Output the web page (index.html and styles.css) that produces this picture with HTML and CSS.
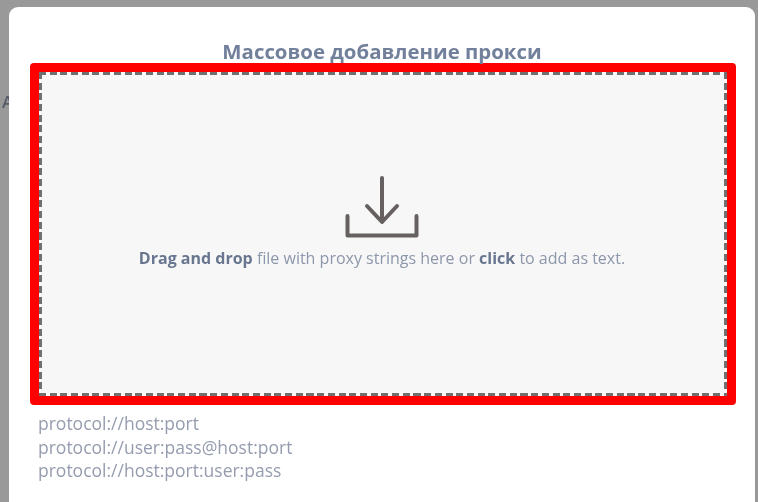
FILE: index.html
```html
<!DOCTYPE html>
<html lang="ru">
<head>
<meta charset="utf-8">
<title>Массовое добавление прокси</title>
<link rel="stylesheet" href="styles.css">
</head>
<body>
<span class="behind-letter">A</span>
<main class="modal">
  <h1 class="modal-title">Массовое добавление прокси</h1>
  <section class="highlight">
    <div class="dropzone">
      <svg class="drop-icon" width="74" height="64" viewBox="0 0 74 64" fill="none" stroke="#666060" stroke-width="4" stroke-linecap="round" stroke-linejoin="round">
        <path d="M37 3V46"/>
        <path d="M22 31L37 47L52 31"/>
        <path d="M2.500 41V60.500H71.500V41"/>
      </svg>
      <p class="drop-text"><strong>Drag and drop</strong> file with proxy strings here or <strong>click</strong> to add as text.</p>
    </div>
  </section>
  <div class="formats">
    <div>protocol://host:port</div>
    <div>protocol://user:pass@host:port</div>
    <div>protocol://host:port:user:pass</div>
  </div>
</main>
</body>
</html>
```

FILE: styles.css
```css
* { box-sizing: border-box; }
html, body { height: 100%; }
body {
  margin: 0;
  padding: 7px 3px 0 9px;
  background: #999999;
  overflow: hidden;
  font-family: "Open Sans", "Noto Sans", sans-serif;
}
.behind-letter {
  position: absolute;
  left: 2px;
  top: 90px;
  font-size: 17px;
  color: #555b66;
  font-weight: 600;
  filter: blur(0.5px);
}
.modal {
  height: 100%;
  background: #ffffff;
  border-radius: 9px 9px 0 0;
  padding: 0 21px;
  filter: blur(0.55px);
}
.modal-title {
  margin: 0;
  padding-top: 31px;
  height: 56px;
  line-height: 26px;
  font-size: 20.400px;
  font-weight: 700;
  text-align: center;
  color: #72809c;
  white-space: nowrap;
}
.highlight {
  width: 706px;
  height: 342px;
  border: 9px solid #ff0000;
  border-radius: 4px;
}
.dropzone {
  --dash-x: repeating-linear-gradient(90deg, #707070 0 7px, transparent 7px 10.700px);
  --dash-y: repeating-linear-gradient(180deg, #707070 0 7px, transparent 7px 10.700px);
  height: 100%;
  background-color: #f7f7f7;
  background-image: var(--dash-x), var(--dash-x), var(--dash-y), var(--dash-y);
  background-size: 100% 3px, 100% 3px, 3px 100%, 3px 100%;
  background-position: 0 0, 0 100%, 0 0, 100% 0;
  background-repeat: no-repeat;
  display: flex;
  flex-direction: column;
  align-items: center;
  padding-top: 103px;
}
.drop-icon { display: block; margin-left: -2px; }
.drop-text {
  margin: 9px 0 0 -2px;
  font-size: 16px;
  line-height: 20px;
  color: #8d97ab;
  white-space: nowrap;
}
.drop-text strong { color: #69768f; font-weight: 700; }
.formats {
  padding: 7px 0 0 8px;
  font-size: 17.500px;
  line-height: 23.500px;
  color: #949cae;
}
```
